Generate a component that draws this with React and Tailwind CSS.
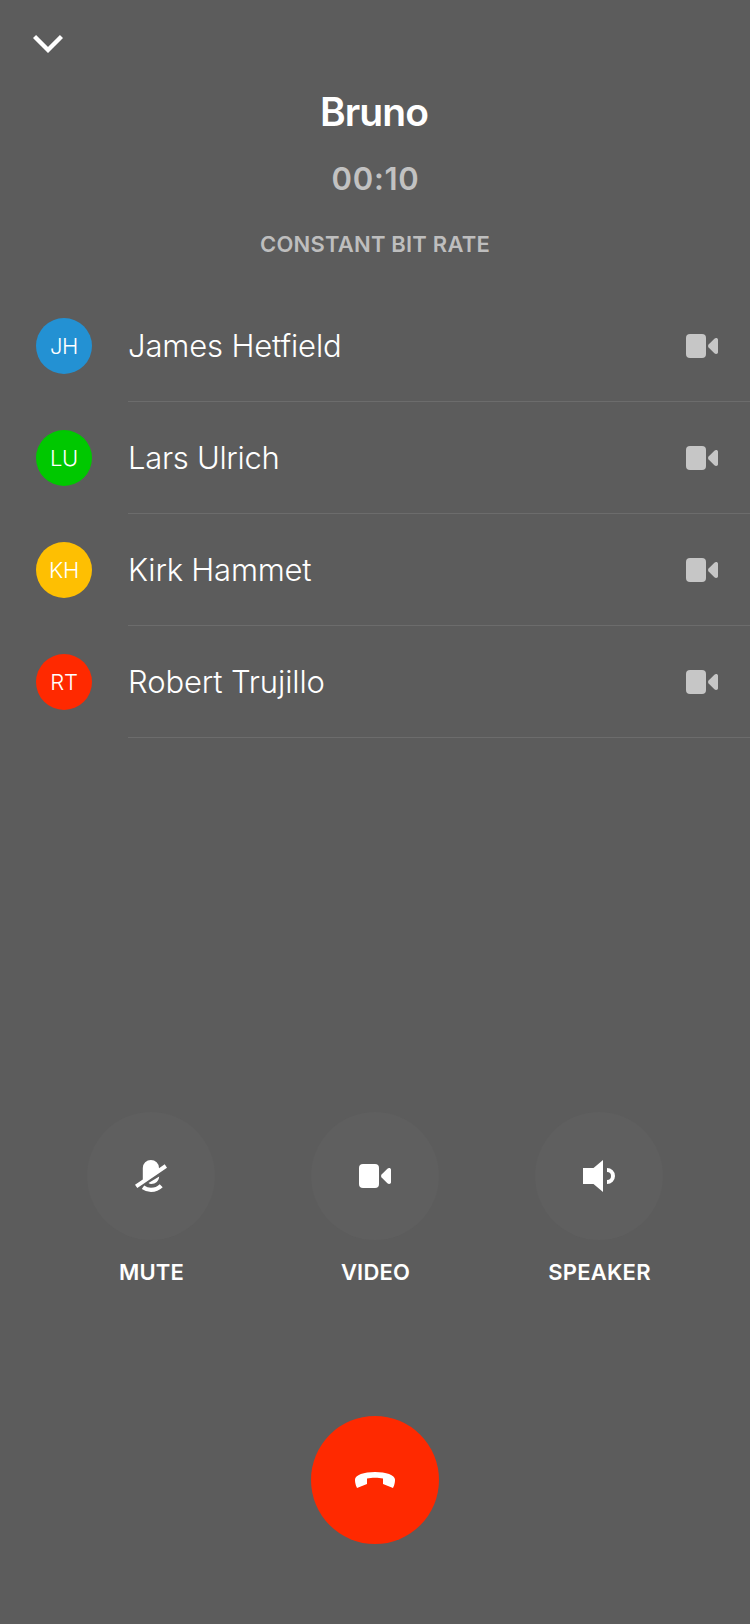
const people = [
  { initials: "JH", name: "James Hetfield", color: "bg-[#2391d3]", tracking: "tracking-[-0.15px]" },
  { initials: "LU", name: "Lars Ulrich", color: "bg-[#00c800]", tracking: "tracking-[-0.3px]" },
  { initials: "KH", name: "Kirk Hammet", color: "bg-[#febf02]", tracking: "tracking-[-0.2px]" },
  { initials: "RT", name: "Robert Trujillo", color: "bg-[#ff2900]", tracking: "tracking-[-0.12px]" },
];

function VideoIcon({ className }) {
  return (
    <svg className={className} width="32" height="24" viewBox="0 0 32 24" fill="currentColor">
      <rect width="20" height="24" rx="4" />
      <path d="M22.6 10.6 28.4 4.7C29.5 3.7 32 3.6 32 6V18C32 20.4 29.5 20.3 28.4 19.3L22.6 13.4Q21.300 12 22.600 10.600Z" />
    </svg>
  );
}

function MuteIcon() {
  return (
    <svg width="32" height="32" viewBox="0 0 32 32" fill="currentColor">
      <path d="M7.800 19.500V8a8.100 8 0 0 1 16.200 0v.2l5.700-3.900L32 7.700 2.300 28 0 24.700Z" />
      <path d="M13.500 22.900 24.200 16.500C24 21 20.600 24 16.200 24c-1 0-1.900-.3-2.700-1.100Z" />
      <path d="M8 27.300c2.600 1.800 5 2.600 8 2.600 4 0 7.600-1.600 10.200-4.200" fill="none" stroke="currentColor" strokeWidth="4.200" />
    </svg>
  );
}

function SpeakerIcon() {
  return (
    <svg width="32" height="32" viewBox="0 0 32 32" fill="currentColor">
      <path d="M0 8h10.500L20 0v32l-9.500-8H0Z" />
      <path d="M24 10a6 6 0 0 1 0 12" fill="none" stroke="currentColor" strokeWidth="4" />
    </svg>
  );
}

function HangUpIcon() {
  return (
    <svg width="40" height="16" viewBox="0 0 40 16" fill="currentColor">
      <path d="M2 16C0 12 0 9 0 7.500 0 3 9 0 20 0s20 3 20 7.500c0 1.500 0 4.500-2 8.500L28 12V6.600C25.500 6 23 5.800 20 5.800S14.500 6 12 6.600V12Z" />
    </svg>
  );
}

function Action({ label, children }) {
  return (
    <div className="flex w-32 flex-col items-center">
      <button className="flex size-32 items-center justify-center rounded-full bg-[#5f5f5f]">{children}</button>
      <span className="mt-[18px] pl-px text-[22px] leading-7 font-[560] tracking-[0.2px]">{label}</span>
    </div>
  );
}

export default function App() {
  return (
    <main className="flex h-[1624px] w-[750px] flex-col bg-[#5c5c5c] font-['Inter',sans-serif] text-white">
      <header className="flex h-[290px] flex-col">
        <button className="mt-[34px] ml-[33px] h-5 w-[30px]" aria-label="Minimize">
          <svg width="30" height="20" viewBox="0 0 30 20" fill="none" stroke="currentColor" strokeWidth="4.400">
            <path d="M1.500 2.500 15 16 28.500 2.500" />
          </svg>
        </button>
        <h1 className="mt-[34px] pr-0.5 text-center text-[39px] leading-12 font-semibold tracking-[-0.9px]">Bruno</h1>
        <p className="mt-[23px] pl-px text-center text-[31px] leading-10 font-[560] tracking-[0.7px] text-[#c2c2c2]">00:10</p>
        <p className="mt-[31px] text-center text-[22px] leading-7 font-[560] tracking-[0.2px] text-[#bebebe]">CONSTANT BIT RATE</p>
      </header>
      <ul>
        {people.map((p) => (
          <li key={p.name} className="flex h-28 items-center pl-9">
            <span className={`flex size-14 items-center justify-center rounded-full text-[22px] font-light tracking-[-0.3px] ${p.color}`}>{p.initials}</span>
            <div className="ml-9 flex h-28 flex-1 items-center justify-between border-b border-[#6c6c6c] pr-8">
              <span className={`pt-px text-[31px] leading-10 font-light ${p.tracking}`}>{p.name}</span>
              <VideoIcon className="text-[#c6c6c6]" />
            </div>
          </li>
        ))}
      </ul>
      <section className="mt-[374px] flex justify-between px-[87px]">
        <Action label="MUTE"><MuteIcon /></Action>
        <Action label="VIDEO"><VideoIcon /></Action>
        <Action label="SPEAKER"><SpeakerIcon /></Action>
      </section>
      <button className="mt-[130px] flex size-32 items-center justify-center self-center rounded-full bg-[#ff2900]" aria-label="Hang up">
        <HangUpIcon />
      </button>
    </main>
  );
}
